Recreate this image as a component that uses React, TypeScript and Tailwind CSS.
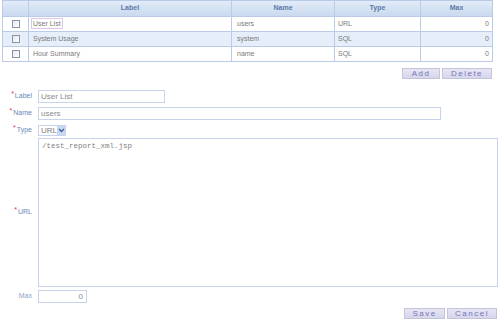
import React from "react";

const rows = [
  { label: "User List", name: "users", type: "URL", max: 0 },
  { label: "System Usage", name: "system", type: "SQL", max: 0 },
  { label: "Hour Summary", name: "name", type: "SQL", max: 0 },
];

const Checkbox: React.FC = () => (
  <span className="inline-block h-[8px] w-[8px] border border-[#8a94a6] bg-gradient-to-br from-[#e4e8ee] to-white align-middle" />
);

const Btn: React.FC<{ label: string; w: string }> = ({ label, w }) => (
  <button
    className={`${w} h-[11px] border border-[#c4c4de] bg-gradient-to-b from-[#e6e6f4] to-[#d6d6ec] text-[8px] leading-[9px] tracking-[1.5px] text-[#7474b4]`}
  >
    {label}
  </button>
);

const FieldLabel: React.FC<{ text: string; req?: boolean; dim?: boolean }> = ({ text, req, dim }) => (
  <div className={`w-[32px] shrink-0 text-right text-[7px] ${dim ? "text-[#8ea2c8]" : "text-[#6a86b8]"}`}>
    {req && <span className="relative -top-[2px] mr-[1px] text-[#e0304a]">*</span>}
    {text}
  </div>
);

export default function App() {
  return (
    <div className="h-[319px] w-[500px] overflow-hidden bg-white font-['Liberation_Sans',Arial,sans-serif]">
      {/* Grid */}
      <table className="ml-[2px] w-[490px] table-fixed border-collapse text-[7px] text-[#7a7a7a]">
        <colgroup>
          <col className="w-[26px]" />
          <col className="w-[203px]" />
          <col className="w-[103px]" />
          <col className="w-[86px]" />
          <col className="w-[72px]" />
        </colgroup>
        <thead>
          <tr className="h-[16px] bg-gradient-to-b from-[#e2ebf8] to-[#c8d8ef] font-bold text-[#5b7aa6]">
            <th className="border border-[#b9cbe6]" />
            <th className="border border-[#b9cbe6]">Label</th>
            <th className="border border-[#b9cbe6]">Name</th>
            <th className="border border-[#b9cbe6]">Type</th>
            <th className="border border-[#b9cbe6]">Max</th>
          </tr>
        </thead>
        <tbody>
          {rows.map((r, i) => (
            <tr key={r.label} className={`h-[15px] ${i === 1 ? "bg-[#e6eefa]" : "bg-white"}`}>
              <td className="border border-[#b9cbe6] text-center">
                <Checkbox />
              </td>
              <td className="border border-[#b9cbe6] px-[2px]">
                <span className={i === 0 ? "border border-[#dcc6ea] px-[1px] py-[1px]" : "px-[2px]"}>
                  {r.label}
                </span>
              </td>
              <td className="border border-[#b9cbe6] px-[5px]">{r.name}</td>
              <td className="border border-[#b9cbe6] px-[3px]">{r.type}</td>
              <td className="border border-[#b9cbe6] px-[3px] text-right">{r.max}</td>
            </tr>
          ))}
        </tbody>
      </table>

      <div className="mt-[6px] flex w-[492px] justify-end gap-[2px]">
        <Btn label="Add" w="w-[38px]" />
        <Btn label="Delete" w="w-[50px]" />
      </div>

      {/* Form */}
      <div className="mt-[11px] flex flex-col">
        <div className="flex h-[13px] items-center gap-[6px]">
          <FieldLabel text="Label" req />
          <input
            readOnly
            value="User List"
            className="h-[13px] w-[127px] border border-[#c6d3ea] px-[2px] text-[8px] text-[#8a8a8a] outline-none"
          />
        </div>
        <div className="mt-[4px] flex h-[13px] items-center gap-[6px]">
          <FieldLabel text="Name" req />
          <input
            readOnly
            value="users"
            className="h-[13px] w-[403px] border border-[#c6d3ea] px-[2px] text-[8px] text-[#8a8a8a] outline-none"
          />
        </div>
        <div className="mt-[5px] flex h-[11px] items-center gap-[6px]">
          <FieldLabel text="Type" req />
          <div className="flex h-[11px] w-[28px] items-center border border-[#c6d3ea] pl-[2px] text-[8px] text-[#808080]">
            <span className="flex-1">URL</span>
            <span className="flex h-[9px] w-[9px] items-center justify-center bg-[#c8d8f2]">
              <svg width="7" height="5" viewBox="0 0 7 5">
                <path d="M1 1 L3.5 3.5 L6 1" stroke="#3f5f9a" strokeWidth="1.4" fill="none" />
              </svg>
            </span>
          </div>
        </div>
        <div className="mt-[2px] flex h-[149px] items-center gap-[6px]">
          <FieldLabel text="URL" req />
          <textarea
            readOnly
            value="/test_report_xml.jsp"
            className="h-[149px] w-[460px] resize-none border border-[#c6d3ea] px-[3px] py-[3px] font-['Liberation_Mono',monospace] text-[7.5px] leading-[9px] text-[#808080] outline-none"
          />
        </div>
        <div className="mt-[3px] flex h-[13px] items-center gap-[6px]">
          <FieldLabel text="Max" dim />
          <input
            readOnly
            value="0"
            className="h-[13px] w-[49px] border border-[#c6d3ea] px-[3px] text-right text-[8px] text-[#8a8a8a] outline-none"
          />
        </div>
        <div className="mt-[5px] flex w-[497px] justify-end gap-[2px]">
          <Btn label="Save" w="w-[41px]" />
          <Btn label="Cancel" w="w-[50px]" />
        </div>
      </div>
    </div>
  );
}
